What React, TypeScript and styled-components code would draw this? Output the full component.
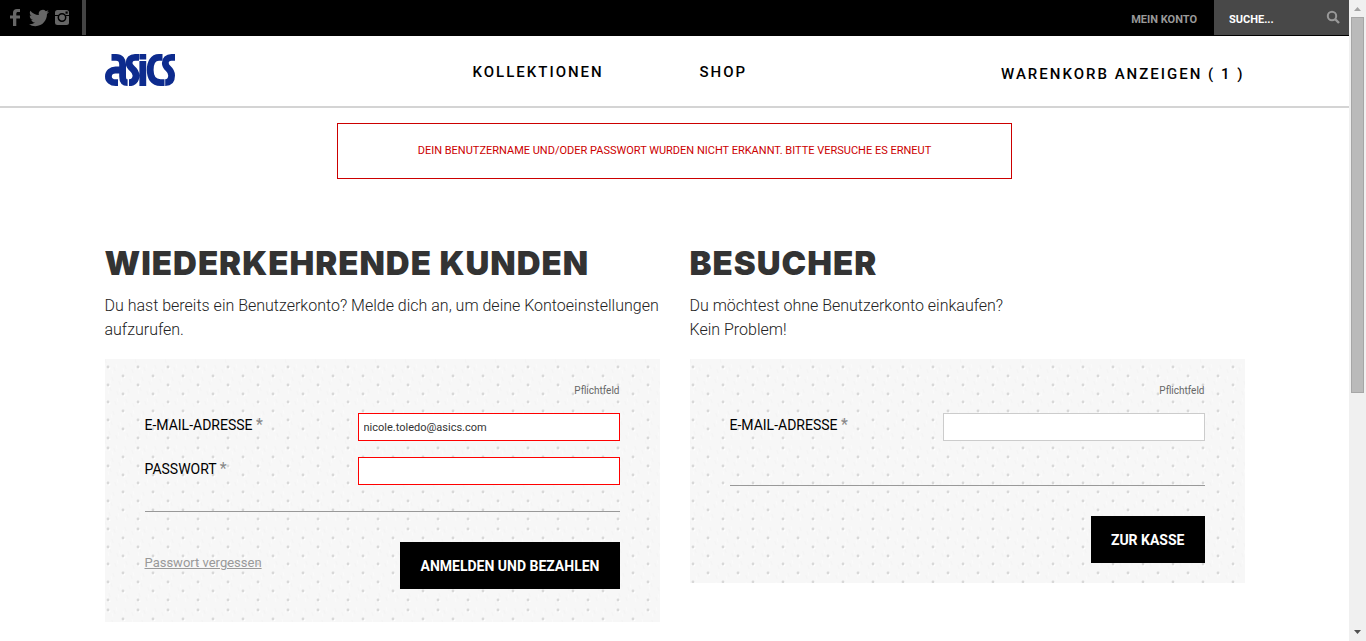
import React from "react";
import styled, { createGlobalStyle } from "styled-components";

const tileRows = [8, 17, 26, 35, 43, 52, 61, 70, 79];
const tile = `<svg xmlns='http://www.w3.org/2000/svg' width='30' height='81'><rect width='30' height='81' fill='#f7f7f7'/>${Array.from(
  { length: 45 },
  (_, i) =>
    `<path d='M${(i * 7) % 29} ${(i * 11) % 78}l1 4' stroke='${i % 2 ? "#fbfbfb" : "#f4f4f4"}'/>`
).join("")}${tileRows
  .map((y, i) => {
    const x = i % 2 ? 18 : 3;
    return `<circle cx='${x + 1}' cy='${y + 1}' r='1.5' fill='#fff'/><circle cx='${x}' cy='${y}' r='1.4' fill='#d8d8d8'/>`;
  })
  .join("")}</svg>`;
const dots = `url("data:image/svg+xml,${encodeURIComponent(tile).replace(/'/g, "%27")}")`;
const sans = `Roboto, "Liberation Sans", sans-serif`;

const GlobalStyle = createGlobalStyle`
  * { box-sizing: border-box; }
  body { margin: 0; background: #fff; color: #333; font-family: ${sans}; }
  h1, h2, p { margin: 0; }
  a { color: inherit; text-decoration: none; }
`;

const Window = styled.div`
  display: flex;
  min-height: 100vh;
`;
const Page = styled.div`
  flex: 1;
  min-width: 0;
`;
const TopBar = styled.div`
  display: flex;
  justify-content: space-between;
  height: 36px;
  background: #000;
  border-bottom: 1px solid #000;
`;
const Social = styled.nav`
  display: flex;
  align-items: center;
  gap: 4px;
  padding: 0 11px 0 5px;
  border-right: 4px solid #444;
  a { display: flex; }
`;
const Tools = styled.div`
  display: flex;
  align-items: center;
  gap: 17px;
  color: #999;
  font-size: 11px;
  font-weight: 700;
`;
const Account = styled.a`
  padding-top: 4px;
`;
const Search = styled.form`
  display: flex;
  align-items: center;
  width: 135px;
  height: 35px;
  padding: 0 9px 0 15px;
  background: #484848;
`;
const SearchInput = styled.input`
  flex: 1;
  min-width: 0;
  height: 32px;
  padding: 4px 0 0;
  border: 0;
  background: none;
  color: #fff;
  font: 700 11px ${sans};
  &::placeholder { color: #fff; opacity: 1; }
`;
const IconButton = styled.button`
  display: flex;
  padding: 0;
  border: 0;
  background: none;
`;
const Header = styled.header`
  border-bottom: 2px solid #d4d4d4;
`;
const Container = styled.div`
  max-width: 1140px;
  margin: 0 auto;
`;
const HeaderRow = styled(Container)`
  display: grid;
  grid-template-columns: 368px 227px 1fr auto;
  align-items: center;
  height: 70px;
`;
const Logo = styled.a`
  display: flex;
`;
const NavLink = styled.a`
  padding-top: 2px;
  color: #000;
  font-size: 15px;
  line-height: 20px;
  font-weight: 500;
  letter-spacing: 2px;
`;
const CartLink = styled(NavLink)`
  padding-top: 6px;
`;
const Alert = styled.p`
  width: 50%;
  margin: 15px auto 0;
  padding: 18px;
  border: 1px solid #c00;
  color: #c00;
  font-size: 11px;
  line-height: 18px;
  font-weight: 400;
  text-align: center;
`;
const Columns = styled(Container)`
  display: grid;
  grid-template-columns: 1fr 1fr;
  align-items: start;
  gap: 30px;
  margin-top: 64px;
`;
const Title = styled.h1`
  font-family: Inter, sans-serif;
  font-size: 33px;
  line-height: 40px;
  font-weight: 900;
  letter-spacing: 1px;
  white-space: nowrap;
`;
const Intro = styled.p`
  padding: 11px 0 17px;
  color: #222;
  font-size: 16px;
  line-height: 24px;
  font-weight: 300;
`;
const Panel = styled.form<{ $end: number }>`
  padding: 24px 40px ${(p) => p.$end}px;
  background: #f7f7f7 ${dots};
`;
const Required = styled.p`
  margin-bottom: 14px;
  color: #666;
  font-size: 10px;
  line-height: 16px;
  text-align: right;
`;
const Field = styled.div`
  display: flex;
  justify-content: space-between;
  margin-bottom: 16px;
`;
const Label = styled.label`
  color: #000;
  font-size: 14px;
  line-height: 24px;
  span { color: #888; font-size: 16px; }
`;
const Input = styled.input<{ $error?: boolean }>`
  width: 262px;
  height: 28px;
  padding: 0 5px;
  border: 1px solid ${(p) => (p.$error ? "#f00" : "#ccc")};
  border-radius: 0;
  background: #fff;
  color: #333;
  font: 400 11px ${sans};
`;
const Actions = styled.div<{ $gap: number }>`
  display: flex;
  align-items: center;
  justify-content: space-between;
  margin-top: ${(p) => p.$gap}px;
  padding-top: 30px;
  border-top: 1px solid #999;
`;
const Forgot = styled.a`
  padding-bottom: 6px;
  color: #999;
  font-size: 13px;
  text-decoration: underline;
`;
const Submit = styled.button`
  height: 47px;
  margin-left: auto;
  padding: 0 20px;
  border: 0;
  background: #000;
  color: #fff;
  font: 700 14px ${sans};
`;
const ScrollBar = styled.div`
  position: sticky;
  top: 0;
  display: flex;
  flex-direction: column;
  align-items: center;
  width: 17px;
  height: 100vh;
  background: #f0f0f0;
  svg { flex: none; }
`;
const Track = styled.div`
  flex: 1;
  width: 13px;
`;
const Thumb = styled.div`
  height: 62%;
  background: #bababa;
  border: 1px solid #a6a6a6;
`;

const FacebookIcon = () => (
  <svg width="20" height="20" viewBox="0 0 20 20" fill="#666">
    <path d="M8 18V10.500H5V7.500h3V5c0-2.600 1.400-4 4-4h3v3h-2c-1.200 0-1.700.5-1.700 1.700v1.800H15v3h-3.700V18z" />
  </svg>
);
const TwitterIcon = () => (
  <svg width="20" height="20" viewBox="0 0 24 24" fill="#666">
    <path d="M23.950 4.570a10 10 0 0 1-2.820.770 4.960 4.960 0 0 0 2.160-2.720c-.950.550-2 .960-3.130 1.180a4.920 4.920 0 0 0-8.380 4.480C7.690 8.090 4.070 6.130 1.640 3.160a4.820 4.820 0 0 0-.670 2.480c0 1.710.870 3.210 2.190 4.100a4.900 4.900 0 0 1-2.230-.620v.060a4.920 4.920 0 0 0 3.950 4.830 5 5 0 0 1-2.210.080 4.940 4.940 0 0 0 4.600 3.420A9.870 9.870 0 0 1 0 19.540a13.990 13.990 0 0 0 7.550 2.210c9.050 0 14-7.500 14-13.980 0-.210 0-.420-.020-.630a9.940 9.940 0 0 0 2.460-2.550z" />
  </svg>
);
const InstagramIcon = () => (
  <svg width="18" height="18" viewBox="0 0 18 18">
    <rect x="2" y="1" width="14" height="15" rx="2.500" fill="#666" />
    <path d="M2 6.500h4M12.500 6.500h4" stroke="#000" />
    <circle cx="9" cy="8.500" r="3.700" fill="#666" stroke="#000" strokeWidth="1.500" />
    <rect x="12.500" y="2.500" width="2.200" height="2.200" fill="#000" />
  </svg>
);
const SearchIcon = () => (
  <svg width="14" height="16" viewBox="0 0 14 16" fill="none" stroke="#999" strokeWidth="2">
    <circle cx="6" cy="6" r="4.200" />
    <path d="M9 9l4 4" strokeWidth="2.400" />
  </svg>
);
const LogoMark = () => (
  <svg width="70" height="34" viewBox="0 0 70 34" fill="none" stroke="#0d2b8e" strokeWidth="6.800">
    <path d="M6.500 3.400H11c4.500 0 6.600 2.800 6.600 6.800v12c0 4.400 1.500 6.400 5 6.400M16.500 16H10.500c-4.200 0-7.100 2.700-7.100 6.400s3 6.200 7.300 6.200H13" />
    <path d="M34 3.400h-4c-4 0-6 2.400-6 5.600 0 6 7 5.200 7 12.500 0 4.600-2.500 7.100-7 7.100M37.800 0v5.500M37.800 7v25M57.500 3.400H54c-6 0-8.800 5.600-8.800 12.600s3 12.600 10.300 12.600h4" />
    <path d="M70 3.400h-3.500c-4 0-6.200 2.400-6.200 5.600 0 6 6.300 5.200 6.300 12.500 0 4.600-2 7.100-6.400 7.100" />
  </svg>
);

export default function App() {
  return (
    <Window>
      <GlobalStyle />
      <Page>
        <TopBar>
          <Social>
            <a href="#facebook" aria-label="Facebook"><FacebookIcon /></a>
            <a href="#twitter" aria-label="Twitter"><TwitterIcon /></a>
            <a href="#instagram" aria-label="Instagram"><InstagramIcon /></a>
          </Social>
          <Tools>
            <Account href="#konto">MEIN KONTO</Account>
            <Search>
              <SearchInput aria-label="Suche" placeholder="SUCHE..." />
              <IconButton type="button" aria-label="Suchen"><SearchIcon /></IconButton>
            </Search>
          </Tools>
        </TopBar>
        <Header>
          <HeaderRow>
            <Logo href="#home" aria-label="asics"><LogoMark /></Logo>
            <NavLink href="#kollektionen">KOLLEKTIONEN</NavLink>
            <NavLink href="#shop">SHOP</NavLink>
            <CartLink href="#warenkorb">WARENKORB ANZEIGEN ( 1 )</CartLink>
          </HeaderRow>
        </Header>
        <Alert role="alert">
          DEIN BENUTZERNAME UND/ODER PASSWORT WURDEN NICHT ERKANNT. BITTE VERSUCHE ES ERNEUT
        </Alert>
        <Columns as="main">
          <section>
            <Title>WIEDERKEHRENDE KUNDEN</Title>
            <Intro>
              Du hast bereits ein Benutzerkonto? Melde dich an, um deine Kontoeinstellungen aufzurufen.
            </Intro>
            <Panel $end={33}>
              <Required>Pflichtfeld</Required>
              <Field>
                <Label htmlFor="email">E-MAIL-ADRESSE <span>*</span></Label>
                <Input id="email" type="email" $error defaultValue="nicole.toledo@asics.com" />
              </Field>
              <Field>
                <Label htmlFor="password">PASSWORT <span>*</span></Label>
                <Input id="password" type="password" $error />
              </Field>
              <Actions $gap={26}>
                <Forgot href="#passwort">Passwort vergessen</Forgot>
                <Submit type="button">ANMELDEN UND BEZAHLEN</Submit>
              </Actions>
            </Panel>
          </section>
          <section>
            <Title as="h2">BESUCHER</Title>
            <Intro>
              Du möchtest ohne Benutzerkonto einkaufen?
              <br />
              Kein Problem!
            </Intro>
            <Panel $end={20}>
              <Required>Pflichtfeld</Required>
              <Field>
                <Label htmlFor="guest-email">E-MAIL-ADRESSE <span>*</span></Label>
                <Input id="guest-email" type="email" />
              </Field>
              <Actions $gap={44}>
                <Submit type="button">ZUR KASSE</Submit>
              </Actions>
            </Panel>
          </section>
        </Columns>
      </Page>
      <ScrollBar aria-hidden="true">
        <svg width="17" height="17" viewBox="0 0 17 17" fill="#a3a3a3"><path d="M5 11l3.500-4 3.500 4z" /></svg>
        <Track><Thumb /></Track>
        <svg width="17" height="17" viewBox="0 0 17 17" fill="#505050"><path d="M5 6h7l-3.500 4z" /></svg>
      </ScrollBar>
    </Window>
  );
}
